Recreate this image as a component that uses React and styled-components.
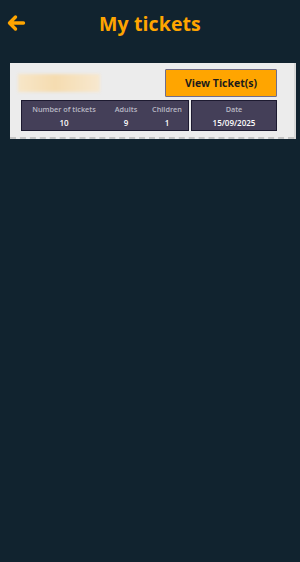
import React from 'react';
import styled, {createGlobalStyle} from 'styled-components';

const GlobalStyle = createGlobalStyle`
    html, body {
        margin: 0;
        padding: 0;
        background-color: #11232f;
    }
    body {
        font-family: "Open Sans", "Noto Sans", sans-serif;
    }
`

const Page = styled.div`
    min-height: 562px;
    background-color: #11232f;
`

const Header = styled.div`
    display: flex;
    align-items: center;
    justify-content: center;
    position: relative;
    height: 46px;
`

const BackButton = styled.div`
    position: absolute;
    left: 6px;
    top: 13px;
    width: 20px;
    height: 20px;
    display: flex;
`

const Title = styled.h1`
    margin: 0;
    color: #ffa500;
    font-size: 19.5px;
    font-weight: 700;
    letter-spacing: 0.1px;
`

const TicketCard = styled.div`
    margin: 17px 6px 0 10px;
    background-color: #ececec;
    padding: 6px 17px 6px 11px;
    border-bottom: 2px dashed #c4c4c4;
    box-shadow: 2px 0 0 #d8d8d8;
`

const TopRow = styled.div`
    display: flex;
    justify-content: space-between;
    align-items: center;
    margin-bottom: 3px;
`

const BlurredName = styled.div`
    width: 82px;
    height: 18px;
    margin-left: -3px;
    background: linear-gradient(90deg, #f7e6c8 0%, #f5dcb0 45%, #f7e8cf 100%);
    filter: blur(1.5px);
`

const ViewButton = styled.button`
    width: 112px;
    height: 28px;
    background-color: #ffa500;
    border: 1px solid #6f6d8c;
    border-radius: 1px;
    color: #1b1b1b;
    font-family: "Open Sans", "Noto Sans", sans-serif;
    font-weight: 700;
    font-size: 10.5px;
    padding: 0;
`

const InfoRow = styled.div`
    display: flex;
    gap: 2px;
`

const InfoBox = styled.div`
    display: flex;
    background-color: #443f58;
    border: 1px solid #1d1a30;
    width: ${props => props.width}px;
    height: 31px;
    box-sizing: border-box;
`

const InfoCell = styled.div`
    width: ${props => props.width}px;
    display: flex;
    flex-direction: column;
    align-items: center;
    padding-top: 3px;
`

const CellLabel = styled.span`
    color: #b8b8c4;
    font-size: 7.3px;
    font-weight: 600;
    line-height: 10px;
    white-space: nowrap;
`

const CellValue = styled.span`
    color: #ffffff;
    font-size: 8px;
    font-weight: 600;
    line-height: 10px;
    margin-top: 4px;
`

const BackArrow = () => (
    <svg width="20" height="20" viewBox="0 0 20 20" fill="none">
        <path
            d="M17.5 10 H4 M9.5 4 L3.5 10 L9.5 16"
            stroke="#ffa500"
            strokeWidth="3.4"
            strokeLinecap="round"
            strokeLinejoin="round"
        />
    </svg>
)

const App = () => {
    return (
        <Page>
            <GlobalStyle />
            <Header>
                <BackButton>
                    <BackArrow />
                </BackButton>
                <Title>My tickets</Title>
            </Header>
            <TicketCard>
                <TopRow>
                    <BlurredName />
                    <ViewButton>View Ticket(s)</ViewButton>
                </TopRow>
                <InfoRow>
                    <InfoBox width={169}>
                        <InfoCell width={84}>
                            <CellLabel>Number of tickets</CellLabel>
                            <CellValue>10</CellValue>
                        </InfoCell>
                        <InfoCell width={40}>
                            <CellLabel>Adults</CellLabel>
                            <CellValue>9</CellValue>
                        </InfoCell>
                        <InfoCell width={42}>
                            <CellLabel>Children</CellLabel>
                            <CellValue>1</CellValue>
                        </InfoCell>
                    </InfoBox>
                    <InfoBox width={86}>
                        <InfoCell width={84}>
                            <CellLabel>Date</CellLabel>
                            <CellValue>15/09/2025</CellValue>
                        </InfoCell>
                    </InfoBox>
                </InfoRow>
            </TicketCard>
        </Page>
    )
}

export default App
